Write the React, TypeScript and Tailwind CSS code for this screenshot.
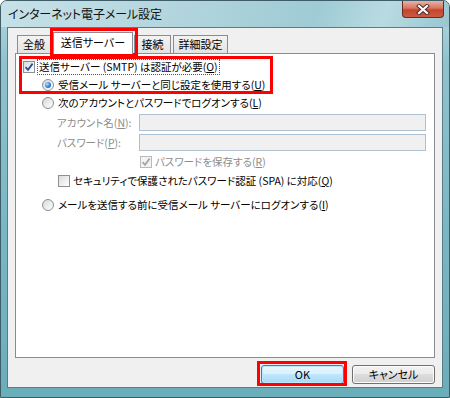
import React from "react";

const jp = "font-['Noto_Sans_CJK_JP','Noto_Sans',sans-serif] [font-feature-settings:'palt']";

function Mn({ children }: { children: React.ReactNode }) {
  return <span className="underline underline-offset-[1px]">{children}</span>;
}

function Check({ checked, disabled }: { checked?: boolean; disabled?: boolean }) {
  return (
    <span
      className={
        "flex h-[12px] w-[12px] shrink-0 items-center justify-center border " +
        (disabled
          ? "border-[#b9b9b9] bg-[#f4f4f4]"
          : "border-[#8e8f8f] bg-[linear-gradient(135deg,#d9dce0,#ffffff)]")
      }
    >
      {checked && (
        <svg width="10" height="10" viewBox="0 0 10 10">
          <path
            d="M1.5 5.2 L4 7.8 L8.6 1.6"
            fill="none"
            stroke={disabled ? "#a6a6a6" : "#2c4f96"}
            strokeWidth="1.8"
          />
        </svg>
      )}
    </span>
  );
}

function Radio({ checked }: { checked?: boolean }) {
  return (
    <span className="flex h-[12px] w-[12px] shrink-0 items-center justify-center rounded-full border border-[#8e8f8f] bg-[linear-gradient(135deg,#d5d8dc,#ffffff)]">
      {checked && (
        <span className="h-[6px] w-[6px] rounded-full bg-[radial-gradient(circle_at_35%_35%,#b8e3ff,#2f7fd6_55%,#184f9e)]" />
      )}
    </span>
  );
}

export default function App() {
  return (
    <div
      className={
        "relative flex h-[398px] w-[450px] flex-col overflow-hidden rounded-t-[7px] border border-[#3e5d68] bg-[linear-gradient(to_bottom,#b9d9e1,#8fc3ce_15%,#78b6c3_60%,#6aaeba)] text-[10.5px] text-black " +
        jp
      }
    >
      {/* Title bar */}
      <div className="flex h-[26px] shrink-0 items-start justify-between bg-[linear-gradient(110deg,#c6e1e8_0%,#b2d5dd_40%,#9ecbd5_70%,#b9dbe2_85%,#98c6d0_100%)] pl-[7px] pr-[5px]">
        <span className="mt-[4px] text-[12px] leading-[18px] tracking-[-0.1px] text-[#111]">
          インターネット電子メール設定
        </span>
        <div className="flex h-[17px] w-[42px] items-center justify-center rounded-b-[4px] border border-t-0 border-[#6b2b20] bg-[linear-gradient(to_bottom,#e9b2a6,#d9735e_45%,#c4452e_55%,#cd5a42)]">
          <svg width="14" height="11" viewBox="0 0 14 11">
            <path d="M3 2 L11 9 M11 2 L3 9" stroke="#4a2a25" strokeWidth="4" strokeLinecap="square" />
            <path d="M3 2 L11 9 M11 2 L3 9" stroke="#ffffff" strokeWidth="2.2" strokeLinecap="square" />
          </svg>
        </div>
      </div>

      {/* Client area */}
      <div className="mx-[6px] flex h-[361px] shrink-0 flex-col border border-[#5c7b86] bg-[#f0f0f0] pl-[7px] pr-[7px] pt-[4px]">
        {/* Tabs */}
        <div className="flex h-[21px] items-end pl-[2px] text-[11px]">
          <div className="flex h-[18px] w-[34px] items-center justify-center border border-b-0 border-[#898c95] bg-[linear-gradient(to_bottom,#f3f3f3,#e3e3e3)]">
            全般
          </div>
          <div className="relative z-10 mb-[-1px] ml-[2px] flex h-[22px] w-[80px] items-center justify-center border border-b-0 border-[#898c95] bg-white pb-[2px]">
            送信サーバー
          </div>
          <div className="ml-[1px] flex h-[18px] w-[37px] items-center justify-center border border-b-0 border-[#898c95] bg-[linear-gradient(to_bottom,#f3f3f3,#e3e3e3)]">
            接続
          </div>
          <div className="ml-[2px] flex h-[18px] w-[55px] items-center justify-center border border-b-0 border-[#898c95] bg-[linear-gradient(to_bottom,#f3f3f3,#e3e3e3)]">
            詳細設定
          </div>
        </div>

        {/* Panel */}
        <div className="flex h-[305px] flex-col border border-[#898c95] bg-white pl-[7px] pr-[6px] pt-[4px]">
          <div className="flex h-[18px] items-center">
            <Check checked />
            <span className="ml-[2px] border border-dotted border-[#555] px-[1px] leading-[14px]">
              送信サーバー (SMTP) は認証が必要(<Mn>O</Mn>)
            </span>
          </div>
          <div className="flex h-[18px] items-center pl-[19px]">
            <Radio checked />
            <span className="ml-[4px]">
              受信メール サーバーと同じ設定を使用する(<Mn>U</Mn>)
            </span>
          </div>
          <div className="flex h-[18px] items-center pl-[19px]">
            <Radio />
            <span className="ml-[4px]">
              次のアカウントとパスワードでログオンする(<Mn>L</Mn>)
            </span>
          </div>

          <div className="mt-[2px] flex h-[17px] items-center pl-[34px] text-[#8d8d8d]">
            <span className="w-[82px]">
              アカウント名(<Mn>N</Mn>):
            </span>
            <div className="h-[17px] w-[287px] border border-[#afc0d0] bg-[#f0f0f0]" />
          </div>
          <div className="mt-[3px] flex h-[17px] items-center pl-[34px] text-[#8d8d8d]">
            <span className="w-[82px]">
              パスワード(<Mn>P</Mn>):
            </span>
            <div className="h-[17px] w-[287px] border border-[#afc0d0] bg-[#f0f0f0]" />
          </div>
          <div className="mt-[2px] flex h-[18px] items-center pl-[117px] text-[#8d8d8d]">
            <Check checked disabled />
            <span className="ml-[3px]">
              パスワードを保存する(<Mn>R</Mn>)
            </span>
          </div>
          <div className="mt-[1px] flex h-[18px] items-center pl-[35px]">
            <Check />
            <span className="ml-[3px]">
              セキュリティで保護されたパスワード認証 (SPA) に対応(<Mn>Q</Mn>)
            </span>
          </div>
          <div className="mt-[6px] flex h-[18px] items-center pl-[19px]">
            <Radio />
            <span className="ml-[4px]">
              メールを送信する前に受信メール サーバーにログオンする(<Mn>I</Mn>)
            </span>
          </div>
        </div>

        {/* Buttons */}
        <div className="mt-[7px] flex justify-end gap-[8px] text-[11px] font-normal">
          <button className="flex h-[19px] w-[83px] items-center justify-center rounded-[3px] border border-[#3c7fb1] bg-[linear-gradient(to_bottom,#eaf6fd,#d9f0fc_50%,#bee6fd_50%,#a7d9f5)] font-normal shadow-[inset_0_0_0_1px_#bfe6fb]">
            OK
          </button>
          <button className="flex h-[19px] w-[83px] items-center justify-center rounded-[3px] border border-[#707070] bg-[linear-gradient(to_bottom,#f2f2f2,#ebebeb_50%,#dddddd_50%,#cfcfcf)] font-normal shadow-[inset_0_0_0_1px_#fcfcfc]">
            キャンセル
          </button>
        </div>
      </div>

      {/* Red annotation boxes */}
      <div className="pointer-events-none absolute left-[49px] top-[27px] h-[28px] w-[88px] border-[3px] border-[#ff0000]" />
      <div className="pointer-events-none absolute left-[18px] top-[55px] h-[38px] w-[254px] border-[3px] border-[#ff0000]" />
      <div className="pointer-events-none absolute left-[256px] top-[360px] h-[25px] w-[90px] border-[3px] border-[#ff0000]" />
    </div>
  );
}
